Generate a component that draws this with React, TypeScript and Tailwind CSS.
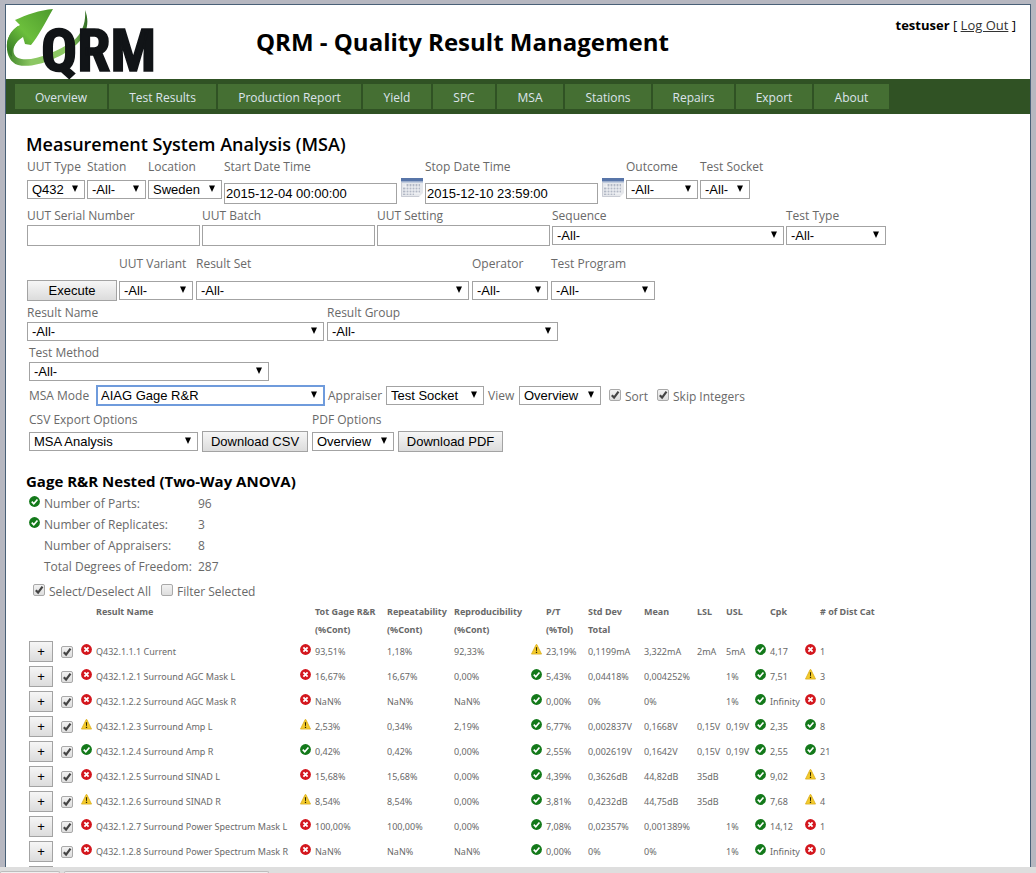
/**
 * QRM: measurement system analysis page.
 *
 * Header with logo and user, main menu, the filter form and the
 * gage R&R result table underneath.
 */

import type { ReactNode } from "react";

type Status = "ok" | "warn" | "bad";

const MENU = [
  { label: "Overview", width: "w-[92px]" },
  { label: "Test Results", width: "w-[107px]" },
  { label: "Production Report", width: "w-[143px]" },
  { label: "Yield", width: "w-[68px]" },
  { label: "SPC", width: "w-[62px]" },
  { label: "MSA", width: "w-[66px]" },
  { label: "Stations", width: "w-[86px]" },
  { label: "Repairs", width: "w-[81px]" },
  { label: "Export", width: "w-[76px]" },
  { label: "About", width: "w-[75px]" },
];

const STATS = [
  { ok: true, label: "Number of Parts:", value: "96" },
  { ok: true, label: "Number of Replicates:", value: "3" },
  { ok: false, label: "Number of Appraisers:", value: "8" },
  { ok: false, label: "Total Degrees of Freedom:", value: "287" },
];

interface Result {
  name: string;
  gage: Status;
  total: string;
  repeat: string;
  reprod: string;
  ptStatus: Status;
  pt: string;
  dev: string;
  mean: string;
  lsl: string;
  usl: string;
  cpk: string;
  catStatus: Status;
  cat: string;
}

const RESULTS: Result[] = [
  { name: "Q432.1.1.1 Current", gage: "bad", total: "93,51%", repeat: "1,18%", reprod: "92,33%", ptStatus: "warn", pt: "23,19%", dev: "0,1199mA", mean: "3,322mA", lsl: "2mA", usl: "5mA", cpk: "4,17", catStatus: "bad", cat: "1" },
  { name: "Q432.1.2.1 Surround AGC Mask L", gage: "bad", total: "16,67%", repeat: "16,67%", reprod: "0,00%", ptStatus: "ok", pt: "5,43%", dev: "0,04418%", mean: "0,004252%", lsl: "", usl: "1%", cpk: "7,51", catStatus: "warn", cat: "3" },
  { name: "Q432.1.2.2 Surround AGC Mask R", gage: "bad", total: "NaN%", repeat: "NaN%", reprod: "NaN%", ptStatus: "ok", pt: "0,00%", dev: "0%", mean: "0%", lsl: "", usl: "1%", cpk: "Infinity", catStatus: "bad", cat: "0" },
  { name: "Q432.1.2.3 Surround Amp L", gage: "warn", total: "2,53%", repeat: "0,34%", reprod: "2,19%", ptStatus: "ok", pt: "6,77%", dev: "0,002837V", mean: "0,1668V", lsl: "0,15V", usl: "0,19V", cpk: "2,35", catStatus: "ok", cat: "8" },
  { name: "Q432.1.2.4 Surround Amp R", gage: "ok", total: "0,42%", repeat: "0,42%", reprod: "0,00%", ptStatus: "ok", pt: "2,55%", dev: "0,002619V", mean: "0,1642V", lsl: "0,15V", usl: "0,19V", cpk: "2,55", catStatus: "ok", cat: "21" },
  { name: "Q432.1.2.5 Surround SINAD L", gage: "bad", total: "15,68%", repeat: "15,68%", reprod: "0,00%", ptStatus: "ok", pt: "4,39%", dev: "0,3626dB", mean: "44,82dB", lsl: "35dB", usl: "", cpk: "9,02", catStatus: "warn", cat: "3" },
  { name: "Q432.1.2.6 Surround SINAD R", gage: "warn", total: "8,54%", repeat: "8,54%", reprod: "0,00%", ptStatus: "ok", pt: "3,81%", dev: "0,4232dB", mean: "44,75dB", lsl: "35dB", usl: "", cpk: "7,68", catStatus: "warn", cat: "4" },
  { name: "Q432.1.2.7 Surround Power Spectrum Mask L", gage: "bad", total: "100,00%", repeat: "100,00%", reprod: "0,00%", ptStatus: "ok", pt: "7,08%", dev: "0,02357%", mean: "0,001389%", lsl: "", usl: "1%", cpk: "14,12", catStatus: "bad", cat: "1" },
  { name: "Q432.1.2.8 Surround Power Spectrum Mask R", gage: "bad", total: "NaN%", repeat: "NaN%", reprod: "NaN%", ptStatus: "ok", pt: "0,00%", dev: "0%", mean: "0%", lsl: "", usl: "1%", cpk: "Infinity", catStatus: "bad", cat: "0" },
];

export default function App() {
  return (
    <div className="flex h-screen flex-col overflow-hidden bg-[#b6b7c0] font-['Open_Sans',sans-serif] text-xs text-[#696969]">
      <div className="mx-[5px] mt-1 min-h-0 flex-1 overflow-hidden border border-b-0 border-[#496077] bg-white">
        <Header />
        <Menu />
        <main className="px-5 pt-[18px]">
          <h1 className="text-lg leading-6 font-semibold text-black">Measurement System Analysis (MSA)</h1>
          <Filters />
          <Summary />
          <ResultTable />
        </main>
      </div>
      <footer className="flex h-1.5 shrink-0 gap-1 bg-[#dedede] pt-1">
        <div className="h-0.5 w-[60px] rounded-t-sm border border-b-0 border-[#bdbdbd] bg-[#f0f0f0]" />
        <div className="h-0.5 w-[205px] rounded-t-sm border border-b-0 border-[#bdbdbd] bg-[#f0f0f0]" />
      </footer>
    </div>
  );
}

function Header() {
  return (
    <header className="flex h-[74px] items-start">
      <Logo />
      <p className="flex-1 pt-[19px] pl-[100px] text-2xl leading-9 font-bold text-black">QRM - Quality Result Management</p>
      <div className="pt-2.5 pr-3.5 text-[13px] leading-5 text-black">
        <b>testuser</b> [ <a href="#logout" className="text-[#333] underline">Log Out</a> ]
      </div>
    </header>
  );
}

function Menu() {
  return (
    <nav className="flex gap-0.5 bg-[#305224] px-[9px] py-[5px]">
      {MENU.map((item) => (
        <a
          key={item.label}
          href="#menu"
          className={`${item.width} h-[25px] bg-[#456f33] text-center leading-[27px] whitespace-nowrap text-[#dde4ec]`}
        >
          {item.label}
        </a>
      ))}
    </nav>
  );
}

function Filters() {
  return (
    <form className="pl-px">
      <div className="flex h-[49px] gap-0.5">
        <Field label="UUT Type" id="type"><Select id="type" width="w-[58px]" value="Q432" space="mt-1" /></Field>
        <Field label="Station" id="station"><Select id="station" width="w-[59px]" value="-All-" space="mt-1" /></Field>
        <Field label="Location" id="location"><Select id="location" width="w-[74px]" value="Sweden" space="mt-1" /></Field>
        <Field label="Start Date Time" id="start"><TextBox id="start" value="2015-12-04 00:00:00" space="mt-[7px]" /></Field>
        <Calendar label="Pick start date" />
        <Field label="Stop Date Time" id="stop"><TextBox id="stop" value="2015-12-10 23:59:00" space="mt-[7px]" /></Field>
        <Calendar label="Pick stop date" />
        <Field label="Outcome" id="outcome"><Select id="outcome" width="w-[72px]" value="-All-" space="mt-1" /></Field>
        <Field label="Test Socket" id="socket"><Select id="socket" width="w-[50px]" value="-All-" space="mt-1" /></Field>
      </div>
      <div className="flex gap-0.5">
        <Field label="UUT Serial Number" id="serial"><TextBox id="serial" /></Field>
        <Field label="UUT Batch" id="batch"><TextBox id="batch" /></Field>
        <Field label="UUT Setting" id="setting"><TextBox id="setting" /></Field>
        <Field label="Sequence" id="sequence"><Select id="sequence" width="w-[232px]" value="-All-" space="mt-px" /></Field>
        <Field label="Test Type" id="testtype"><Select id="testtype" width="w-[100px]" value="-All-" space="mt-px" /></Field>
      </div>
      <div className="flex items-end gap-0.5 pt-[7px]">
        <Button width="w-[90px]">Execute</Button>
        <div className="flex gap-[3px] pb-px">
          <Field label="UUT Variant" id="variant"><Select id="variant" width="w-[74px]" value="-All-" space="mt-2" /></Field>
          <Field label="Result Set" id="set"><Select id="set" width="w-[273px]" value="-All-" space="mt-2" /></Field>
          <Field label="Operator" id="operator"><Select id="operator" width="w-[76px]" value="-All-" space="mt-2" /></Field>
          <Field label="Test Program" id="program"><Select id="program" width="w-[104px]" value="-All-" space="mt-2" /></Field>
        </div>
      </div>
      <div className="flex gap-[3px] pt-px">
        <Field label="Result Name" id="name"><Select id="name" width="w-[297px]" value="-All-" /></Field>
        <Field label="Result Group" id="group"><Select id="group" width="w-[231px]" value="-All-" /></Field>
      </div>
      <div className="pt-px pl-0.5">
        <Field label="Test Method" id="method"><Select id="method" width="w-[240px]" value="-All-" /></Field>
        <div className="mt-[3px] flex h-[22px] items-center gap-1 whitespace-nowrap">
          <label htmlFor="mode" className="w-16 pt-0.5">MSA Mode</label>
          <Select id="mode" width="w-[227px]" value="AIAG Gage R&R" focused />
          <label htmlFor="appraiser" className="w-[54px] pt-0.5">Appraiser</label>
          <Select id="appraiser" width="w-[98px]" value="Test Socket" />
          <label htmlFor="view" className="w-[27px] pt-0.5">View</label>
          <Select id="view" width="w-[82px]" value="Overview" />
          <label className="ml-1 flex w-11 items-center gap-1 pt-1"><RaisedCheck on /> Sort</label>
          <label className="flex items-center gap-1 pt-1"><RaisedCheck on /> Skip Integers</label>
        </div>
        <div className="flex items-end gap-1 pt-[3px]">
          <Field label="CSV Export Options" id="csv"><Select id="csv" width="w-[169px]" value="MSA Analysis" space="my-px mt-[3px]" /></Field>
          <Button width="w-[106px]">Download CSV</Button>
          <Field label="PDF Options" id="pdf"><Select id="pdf" width="w-[82px]" value="Overview" space="my-px mt-[3px]" /></Field>
          <Button width="w-[105px]">Download PDF</Button>
        </div>
      </div>
    </form>
  );
}

function Summary() {
  return (
    <section className="pt-[17px]">
      <h2 className="text-[15px] leading-6 font-bold text-black">Gage R&amp;R Nested (Two-Way ANOVA)</h2>
      <table className="ml-[3px]">
        <tbody>
          {STATS.map((stat) => (
            <tr key={stat.label} className="h-[21px] leading-[21px]">
              <td className="w-[15px] p-0">{stat.ok && <StatusIcon status="ok" />}</td>
              <td className="w-[154px] p-0 whitespace-nowrap">{stat.label}</td>
              <td className="p-0">{stat.value}</td>
            </tr>
          ))}
        </tbody>
      </table>
      <div className="flex h-[26px] items-center gap-2.5 pt-1 pl-[7px]">
        <label className="flex items-center gap-1"><RaisedCheck on /> Select/Deselect All</label>
        <label className="flex items-center gap-1"><RaisedCheck /> Filter Selected</label>
      </div>
    </section>
  );
}

function ResultTable() {
  return (
    <table className="ml-[3px] w-[861px] table-fixed font-['Noto_Sans',sans-serif] text-[9px] leading-[18px] whitespace-nowrap">
      <colgroup>
        <col className="w-[30px]" />
        <col className="w-[22px]" />
        <col className="w-[15px]" />
        <col className="w-[204px]" />
        <col className="w-[15px]" />
        <col className="w-[72px]" />
        <col className="w-[67px]" />
        <col className="w-[77px]" />
        <col className="w-[15px]" />
        <col className="w-[42px]" />
        <col className="w-[56px]" />
        <col className="w-[53px]" />
        <col className="w-[29px]" />
        <col className="w-[29px]" />
        <col className="w-[15px]" />
        <col className="w-[35px]" />
        <col className="w-[15px]" />
        <col className="w-[70px]" />
      </colgroup>
      <thead>
        <tr className="text-left align-top">
          <th colSpan={3} />
          <Th>Result Name</Th>
          <th />
          <Th>Tot Gage R&amp;R<br />(%Cont)</Th>
          <Th>Repeatability<br />(%Cont)</Th>
          <Th>Reproducibility<br />(%Cont)</Th>
          <th />
          <Th>P/T<br />(%Tol)</Th>
          <Th>Std Dev<br />Total</Th>
          <Th>Mean</Th>
          <Th>LSL</Th>
          <Th>USL</Th>
          <th />
          <Th>Cpk</Th>
          <th />
          <Th># of Dist Cat</Th>
        </tr>
      </thead>
      <tbody>
        {RESULTS.map((row) => (
          <tr key={row.name} className="h-[25px]">
            <td className="p-0"><Expand name={row.name}>+</Expand></td>
            <td className="p-0 pl-[2px]"><Check on label={`Select ${row.name}`} /></td>
            <td className="p-0"><StatusIcon status={row.gage} /></td>
            <td className="p-0">{row.name}</td>
            <td className="p-0"><StatusIcon status={row.gage} /></td>
            <td className="p-0">{row.total}</td>
            <td className="p-0">{row.repeat}</td>
            <td className="p-0">{row.reprod}</td>
            <td className="p-0"><StatusIcon status={row.ptStatus} /></td>
            <td className="p-0">{row.pt}</td>
            <td className="p-0">{row.dev}</td>
            <td className="p-0">{row.mean}</td>
            <td className="p-0">{row.lsl}</td>
            <td className="p-0">{row.usl}</td>
            <td className="p-0"><StatusIcon status="ok" /></td>
            <td className="p-0">{row.cpk}</td>
            <td className="p-0"><StatusIcon status={row.catStatus} /></td>
            <td className="p-0">{row.cat}</td>
          </tr>
        ))}
        <tr className="h-[25px]">
          <td className="p-0"><Expand name="next result" /></td>
          <td colSpan={17} />
        </tr>
      </tbody>
    </table>
  );
}

function Th({ children }: { children: ReactNode }) {
  return <th className="p-0 font-bold">{children}</th>;
}

function Expand({ name, children }: { name: string; children?: ReactNode }) {
  return (
    <button
      type="button"
      aria-label={`Expand ${name}`}
      className="block h-[21px] w-6 border border-[#a3a3a3] bg-linear-to-b from-[#f6f6f6] to-[#dcdcdc] font-['Liberation_Sans',sans-serif] text-[13px] leading-[18px] text-black"
    >
      {children}
    </button>
  );
}

function Field({ label, id, children }: { label: string; id: string; children: ReactNode }) {
  return (
    <div className="flex w-min flex-col">
      <label htmlFor={id} className="h-5 w-0 leading-[22px] whitespace-nowrap">{label}</label>
      {children}
    </div>
  );
}

function Select({ id, width, value, space = "", focused }: { id: string; width: string; value: string; space?: string; focused?: boolean }) {
  const frame = focused ? "outline-2 -outline-offset-1 outline-[#6f9bdc]" : "border border-[#a3a3a3]";
  return (
    <div className={`relative ${width} ${space}`}>
      <select
        id={id}
        className={`block h-[19px] w-full appearance-none bg-white pl-1 font-['Liberation_Sans',sans-serif] text-[13px] leading-[17px] text-black ${frame}`}
      >
        <option>{value}</option>
      </select>
      <svg viewBox="0 0 6 7" className="pointer-events-none absolute top-[5px] right-[7px] h-[7px] w-1.5">
        <path d="M0 0.5h6L3 7z" fill="#000" />
      </svg>
    </div>
  );
}

function TextBox({ id, value = "", space = "" }: { id: string; value?: string; space?: string }) {
  return (
    <input
      id={id}
      defaultValue={value}
      className={`h-[21px] w-[173px] border border-[#a3a3a3] bg-white px-px font-['Liberation_Sans',sans-serif] text-[13px] text-black ${space}`}
    />
  );
}

function Button({ width, children }: { width: string; children: ReactNode }) {
  return (
    <button
      type="button"
      className={`h-[21px] ${width} border border-[#a3a3a3] bg-linear-to-b from-[#f6f6f6] to-[#dcdcdc] font-['Liberation_Sans',sans-serif] text-[13px] leading-[19px] whitespace-nowrap text-black`}
    >
      {children}
    </button>
  );
}

function Check({ on, label }: { on?: boolean; label?: string }) {
  return (
    <span className="relative block size-3 shrink-0">
      <input
        type="checkbox"
        defaultChecked={on}
        aria-label={label}
        className="block size-3 appearance-none rounded-xs border border-[#a9a9a9] bg-linear-to-b from-[#f2f2f2] to-[#dedede]"
      />
      {on && (
        <svg viewBox="0 0 12 12" className="pointer-events-none absolute inset-0 size-3">
          <path d="M2.8 6.2l2.3 2.4 4.4-6" fill="none" stroke="#444" strokeWidth="2.2" />
        </svg>
      )}
    </span>
  );
}

// check box that sits a little above the text of its label
function RaisedCheck({ on }: { on?: boolean }) {
  return (
    <span className="pb-1">
      <Check on={on} />
    </span>
  );
}

function StatusIcon({ status }: { status: Status }) {
  if (status === "warn") {
    return (
      <svg viewBox="0 0 12 12" className="mb-1 block size-[11px]">
        <path d="M5.6 0.6L0.5 11h11L6.4 0.6z" fill="#f4cb2c" stroke="#d9ab1c" strokeWidth="0.8" strokeLinejoin="round" />
        <path d="M5.3 3.6h1.4L6.4 7.6h-.8zM5.3 8.4h1.4v1.4H5.3z" fill="#2c2200" />
      </svg>
    );
  }
  const ok = status === "ok";
  return (
    <svg viewBox="0 0 12 12" className="mb-1 block size-[11px]">
      <circle cx="6" cy="6" r="5.9" fill={ok ? "#13791a" : "#d3161d"} />
      <path
        d={ok ? "M3 6.2l2.2 2.2L9.2 3.8" : "M3.7 3.7l4.6 4.6M8.3 3.7L3.7 8.3"}
        fill="none"
        stroke="#fff"
        strokeWidth={ok ? 1.8 : 2}
      />
    </svg>
  );
}

function Calendar({ label }: { label: string }) {
  return (
    <button type="button" aria-label={label} className="mt-[22px] ml-0.5 block h-[19px] w-[22px]">
      <svg viewBox="0 0 22 19" className="block h-[19px] w-[22px]">
        <path d="M0 0h22v19H0z" fill="#e6e8ec" />
        <path d="M0 0h22v3.5H0z" fill="#5875a8" />
        <path d="M0 3.5h22v1H0z" fill="#9db0d0" />
        <path d="M5 6h14v3H5zM2 9h17v6H2zM2 15h11v2H2z" fill="#b2b8c5" />
        <path d="M2 9h17M2 12h17M2 15h17M5 6v11M8 6v11M11 6v11M14 6v9M17 6v9" stroke="#f6f7f9" strokeWidth="1" />
        <path d="M0.5 4v14.500h18" fill="none" stroke="#c9ccd4" />
        <path d="M18 19l4-4v4z" fill="#fff" />
      </svg>
    </button>
  );
}

function Logo() {
  return (
    <svg viewBox="0 0 150 74" className="h-[74px] w-[150px] shrink-0 overflow-visible" role="img" aria-label="QRM">
      <defs>
        <linearGradient id="arrow" x1="0" y1="1" x2="1" y2="0">
          <stop offset="0" stopColor="#2f6f22" />
          <stop offset="0.45" stopColor="#6cbf3c" />
          <stop offset="1" stopColor="#4d9a2c" />
        </linearGradient>
        <linearGradient id="sweep" x1="0" y1="0" x2="1" y2="0">
          <stop offset="0" stopColor="#3f8528" />
          <stop offset="0.3" stopColor="#8cc763" />
          <stop offset="0.8" stopColor="#8cc763" />
          <stop offset="1" stopColor="#2f6b22" />
        </linearGradient>
      </defs>
      <path d="M79 5C84 17 81 30 71 39C56 53 28 64 12 60C2 57 -1 44 2 34C4 28 8 24 12 21L16 32C6 39 5 50 12 53C24 58 50 48 67 36C77 28 80 16 79 5z" fill="url(#sweep)" />
      <path d="M47 4C34 5 20 10 9 15L14 20C4 25 0 35 1 43C2 47 4 50 6 52C5 44 9 37 17 32L19 39L25 40C32 32 39 18 47 4z" fill="url(#arrow)" />
      <text
        x="35"
        y="66"
        fontSize="60"
        fontWeight="700"
        fill="#111417"
        stroke="#111417"
        strokeWidth="1.6"
        className="font-['Roboto_Condensed',Roboto,sans-serif]"
      >
        QRM
      </text>
    </svg>
  );
}
